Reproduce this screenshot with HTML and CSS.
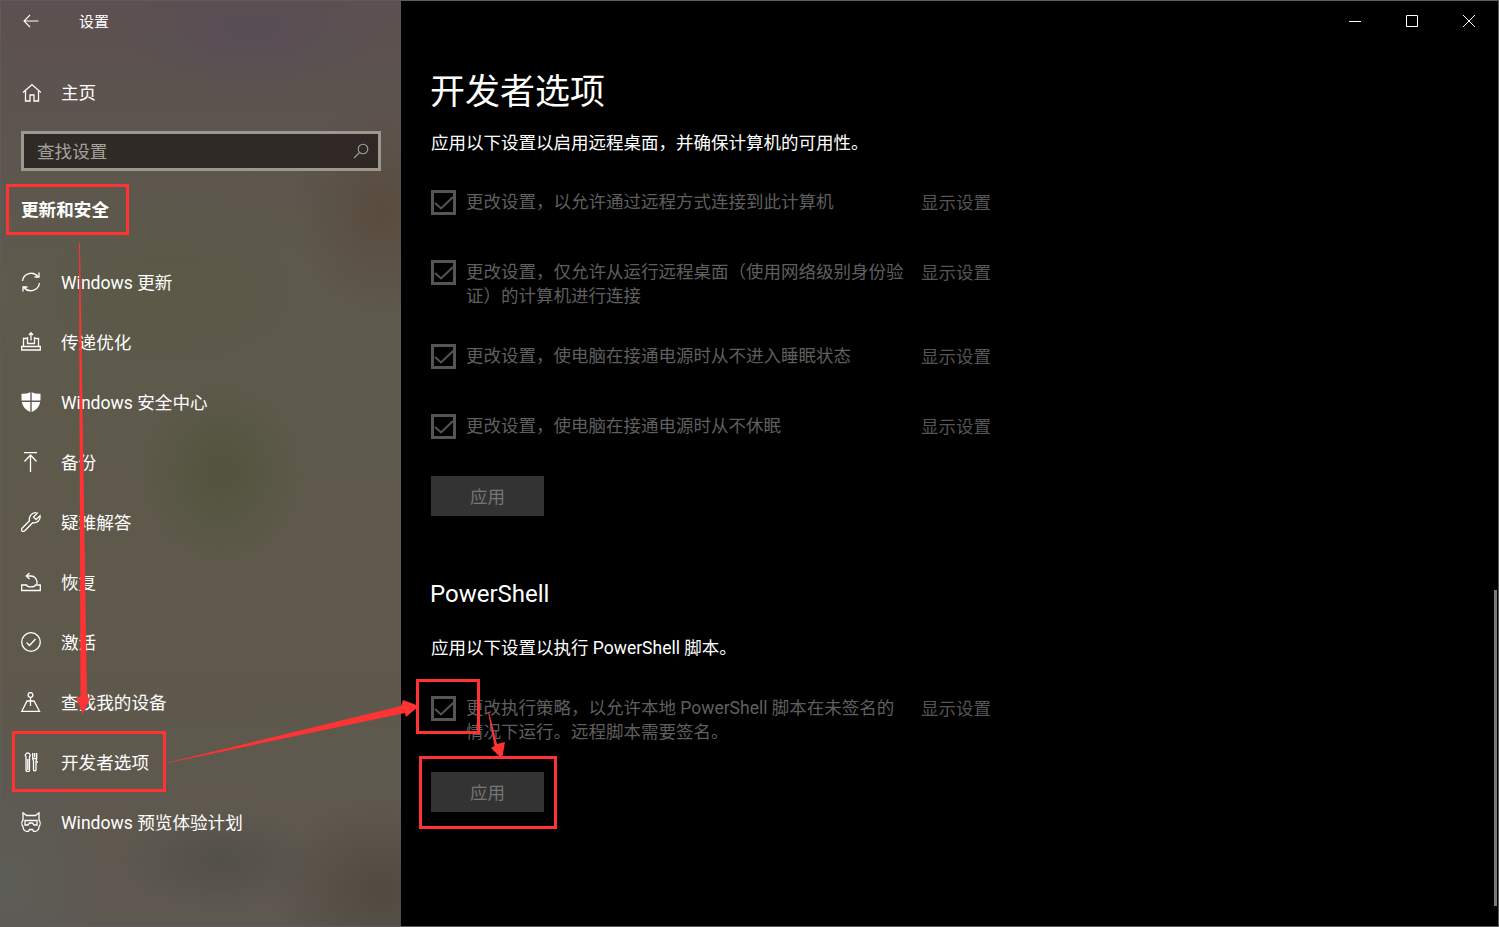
FILE: index.html
```html
<!DOCTYPE html>
<html lang="zh-CN">
  <head>
    <meta charset="utf-8">
    <title>设置</title>
    <link rel="stylesheet" href="styles.css">
  </head>
  <body>
    <div class="window">
      <aside class="sidebar">
        <div class="titlebar">
          <svg class="back" viewBox="0 0 16 14"><path d="M15.5 7H1M7 1L1 7l6 6"/></svg>
          <span class="title">设置</span>
        </div>

        <div class="nav-row home-row">
          <svg class="icon" viewBox="0 0 20 20"><path d="M2 10.5L11 2.5l9 8M4.5 8.5V19H9v-6h4v6h4.500V8.500"/></svg>
          <span>主页</span>
        </div>

        <div class="search">
          <span>查找设置</span>
          <svg class="search-icon" viewBox="0 0 16 16"><circle cx="10" cy="6" r="4.800"/><path d="M6.500 9.500L1 15"/></svg>
        </div>

        <h2 class="section">更新和安全</h2>

        <nav class="nav">
          <div class="nav-row">
            <svg class="icon" viewBox="0 0 20 20"><path d="M1.500 9A8.800 8.800 0 0 1 17 4.500M18.500 11A8.800 8.800 0 0 1 3 15.500M18 .5V5h-4.500M2 19.500V15h4.500"/></svg>
            <span>Windows 更新</span>
          </div>
          <div class="nav-row">
            <svg class="icon" viewBox="0 0 20 20"><path d="M.7 14.500h18.600v3.500H.7zM2.500 14.500V6.500H6M17.500 14.500V6.500H14M6.500 5v6.500h7V5M10 .5v8M8 3l2-2.300L12 3"/></svg>
            <span>传递优化</span>
          </div>
          <div class="nav-row">
            <svg class="icon icon-solid" viewBox="0 0 20 20"><path d="M.5 1.800Q6 2 9.300.2v8.300H.5zM10.700.2Q14 2 19.500 1.800v6.700h-8.800zM.8 10h8.500v10Q2 17 .8 10zM10.700 10h8.500Q18 17 10.700 20z"/></svg>
            <span>Windows 安全中心</span>
          </div>
          <div class="nav-row">
            <svg class="icon" viewBox="0 0 20 20"><path d="M3 .7h13M9.500 3v17M3.500 9.500l6-6.500 6 6.500"/></svg>
            <span>备份</span>
          </div>
          <div class="nav-row">
            <svg class="icon" viewBox="0 0 20 20"><path d="M.8 16.500L8.500 8.800C7.600 4.500 10.500.5 15 .7c.5 0 1 .1 1.400.3L12.500 5l2.500 2.500 4-3.800c.8 4-2.600 7.800-7.300 7L3.800 18.800c-2 1.500-4.500-.5-3-2.300z"/></svg>
            <span>疑难解答</span>
          </div>
          <div class="nav-row">
            <svg class="icon" viewBox="0 0 20 20"><path d="M.7 13h4.800c.5 2.500 8.500 2.500 9 0h4.800v5.500H.7zM16 12C16.500 7 13.500 4 10 4H5.500M8.500 1L5.300 4l3.200 3"/></svg>
            <span>恢复</span>
          </div>
          <div class="nav-row">
            <svg class="icon" viewBox="0 0 20 20"><circle cx="10" cy="10" r="9.300"/><path d="M5.500 10.500l3 3 6-6.500"/></svg>
            <span>激活</span>
          </div>
          <div class="nav-row">
            <svg class="icon" viewBox="0 0 20 20"><circle cx="9.500" cy="3" r="2.400"/><path d="M9.500 5.500V14M6 9h7l5.500 10.300H.8z"/></svg>
            <span>查找我的设备</span>
          </div>
          <div class="nav-row">
            <svg class="icon" viewBox="0 0 20 20"><path d="M5 4.800A2.300 2.300 0 1 1 8.500 4.800V18a1.700 1.700 0 0 1-3.500 0zM6.800 7v11M11.700 1v5.500h4V1M13.700 1v4M11.700 6.500L12.500 9v9a1.300 1.300 0 0 0 2.500 0V9l.7-2.500M15.500 10h1.500"/></svg>
            <span>开发者选项</span>
          </div>
          <div class="nav-row">
            <svg class="icon" viewBox="0 0 20 20"><path d="M2 .8L5.500 3.500h9L18 .8V8c1.500 2 1.500 5 0 6.500 0 2.500-1.500 4.800-4 4.800h-1.500l-1-1.800h-3l-1 1.800H6c-2.500 0-4-2.300-4-4.800C.5 13 .5 10 2 8zM4 8.500h12V13h-3l-1.500-2h-3L7 13H4z"/></svg>
            <span>Windows 预览体验计划</span>
          </div>
        </nav>
      </aside>

      <main class="main">
        <div class="controls">
          <span class="control"><svg viewBox="0 0 14 14"><path d="M1 7.500h12"/></svg></span>
          <span class="control"><svg viewBox="0 0 14 14"><path d="M1.500 1.500h11v11h-11z"/></svg></span>
          <span class="control"><svg viewBox="0 0 14 14"><path d="M1 1l12 12M13 1L1 13"/></svg></span>
        </div>

        <div class="content">
          <h1 class="page-title">开发者选项</h1>
          <p class="intro">应用以下设置以启用远程桌面，并确保计算机的可用性。</p>

          <div class="option">
            <span class="check"><svg viewBox="0 0 19 19"><path d="M1 10l6 5.500L19 4"/></svg></span>
            <span class="option-text">更改设置，以允许通过远程方式连接到此计算机</span>
            <a class="option-link">显示设置</a>
          </div>
          <div class="option">
            <span class="check"><svg viewBox="0 0 19 19"><path d="M1 10l6 5.500L19 4"/></svg></span>
            <span class="option-text">更改设置，仅允许从运行远程桌面（使用网络级别身份验<br>证）的计算机进行连接</span>
            <a class="option-link">显示设置</a>
          </div>
          <div class="option">
            <span class="check"><svg viewBox="0 0 19 19"><path d="M1 10l6 5.500L19 4"/></svg></span>
            <span class="option-text">更改设置，使电脑在接通电源时从不进入睡眠状态</span>
            <a class="option-link">显示设置</a>
          </div>
          <div class="option">
            <span class="check"><svg viewBox="0 0 19 19"><path d="M1 10l6 5.500L19 4"/></svg></span>
            <span class="option-text">更改设置，使电脑在接通电源时从不休眠</span>
            <a class="option-link">显示设置</a>
          </div>
          <button class="apply">应用</button>

          <h2 class="sub-title">PowerShell</h2>
          <p class="intro intro-ps">应用以下设置以执行 PowerShell 脚本。</p>

          <div class="option">
            <span class="check"><svg viewBox="0 0 19 19"><path d="M1 10l6 5.500L19 4"/></svg></span>
            <span class="option-text">更改执行策略，以允许本地 PowerShell 脚本在未签名的<br>情况下运行。远程脚本需要签名。</span>
            <a class="option-link">显示设置</a>
          </div>
          <button class="apply apply-ps">应用</button>
        </div>

        <div class="scrollbar"></div>
      </main>

      <!-- red annotations drawn on top of the screenshot -->
      <svg class="marks" viewBox="0 0 1499 927">
        <rect x="7.500" y="185.500" width="120" height="48"/>
        <rect x="13.500" y="732.500" width="151" height="58"/>
        <rect x="417.500" y="680.500" width="61" height="52"/>
        <rect x="420.500" y="757.500" width="135" height="70"/>
        <polygon points="79,243 80,243 87,698 91,697 82.500,714 76,697 80.500,698"/>
        <polygon points="168,762.500 401,706 403,700 419,706 406,717 405,713 168,763"/>
        <polygon points="488,712 489,712 497,744 505,742 502,759 491,748 494.500,746"/>
      </svg>
    </div>
  </body>
</html>
```

FILE: styles.css
```css
* { box-sizing: border-box; }

html, body { margin: 0; height: 100%; }

body {
  font-family: Roboto, "Noto Sans CJK SC", sans-serif;
  font-size: 17.5px;
  color: #fff;
  background: #000;
}

.window {
  position: relative;
  display: flex;
  width: 1499px;
  height: 927px;
  border: 1px solid #5c5c5c;
  overflow: hidden;
}

/* sidebar */
.sidebar {
  width: 400px;
  flex: none;
  background:
    radial-gradient(ellipse 80px 90px at 220px 470px, rgba(78, 82, 57, .8) 0%, rgba(78, 82, 57, 0) 100%),
    radial-gradient(ellipse 130px 60px at 250px 30px, rgba(88, 76, 88, .8) 0%, rgba(90, 76, 88, 0) 100%),
    radial-gradient(ellipse 100px 50px at 220px 860px, rgba(80, 78, 72, .8) 0%, rgba(86, 83, 73, 0) 100%),
    radial-gradient(ellipse 90px 110px at 380px 210px, rgba(88, 72, 58, .75) 0%, rgba(92, 74, 59, 0) 100%),
    radial-gradient(ellipse 110px 90px at 380px 890px, rgba(78, 70, 60, .8) 0%, rgba(80, 72, 63, 0) 100%),
    radial-gradient(ellipse 90px 120px at 10px 880px, rgba(92, 94, 88, .8) 0%, rgba(95, 96, 91, 0) 100%),
    radial-gradient(ellipse 160px 100px at 170px 280px, rgba(90, 88, 70, .8) 0%, rgba(95, 92, 74, 0) 100%),
    linear-gradient(180deg, #5c5050 0%, #5e5a4c 30%, #5e594a 65%, #5e5851 100%);
}

.titlebar {
  display: flex;
  align-items: center;
  height: 40px;
  padding-left: 22px;
}

.back {
  width: 16px;
  height: 14px;
  fill: none;
  stroke: #fff;
  stroke-width: 1.100;
}

.title {
  margin: -2px 0 0 40px;
  font-size: 15px;
}

.nav-row {
  display: flex;
  align-items: center;
  height: 60px;
  padding-left: 20px;
  gap: 20px;
  font-size: 17.6px;
  line-height: 1;
  white-space: nowrap;
}

.nav-row span { margin-top: 4px; }

.home-row { margin-top: 21px; }

.icon {
  width: 20px;
  height: 20px;
  flex: none;
  fill: none;
  stroke: #fff;
  stroke-width: 1.300;
}

.icon-solid { fill: #fff; stroke: none; }

.search {
  display: flex;
  align-items: center;
  justify-content: space-between;
  width: 360px;
  height: 40px;
  margin: 9px 0 0 20px;
  padding: 0 9px 0 13px;
  border: 3px solid #9b9892;
  background: rgba(18, 14, 14, 0.6);
  color: #a5a29d;
  font-size: 17.6px;
}

.search span { margin-top: -1px; }

.search-icon {
  width: 16px;
  height: 16px;
  fill: none;
  stroke: #a5a29d;
  stroke-width: 1.100;
}

.section {
  margin: 27px 0 0 20px;
  height: 24px;
  font-size: 17.600px;
  line-height: 24px;
  font-weight: 700;
}

.nav { margin-top: 30px; }

/* main pane */
.main {
  position: relative;
  flex: 1;
  min-width: 0;
  background: #000;
}

.controls {
  display: flex;
  justify-content: flex-end;
  height: 41px;
  padding-right: 1px;
}

.control {
  display: flex;
  align-items: center;
  justify-content: center;
  width: 57px;
  height: 40px;
}

.control svg {
  width: 14px;
  height: 14px;
  fill: none;
  stroke: #fff;
  stroke-width: 1;
}

.content { padding-left: 30px; }

.page-title {
  margin: 26px 0 0 -1px;
  font-size: 35px;
  font-weight: 400;
  line-height: 50px;
  height: 50px;
}

.intro {
  margin: 13px 0 0;
  line-height: 24px;
  height: 24px;
}

.option {
  display: flex;
  align-items: flex-start;
  width: 560px;
  margin-top: 36px;
  min-height: 34px;
}

.intro + .option { margin-top: 35px; }

.intro-ps + .option { margin-top: 36px; }

.check {
  width: 25px;
  height: 25px;
  flex: none;
  margin-right: 10px;
  border: 3px solid #555;
  display: flex;
}

.check svg {
  width: 19px;
  height: 19px;
  fill: none;
  stroke: #555;
  stroke-width: 2;
  overflow: visible;
}

.option-text {
  flex: 1;
  padding-top: 1px;
  color: #5f5f5f;
  line-height: 23.500px;
  white-space: nowrap;
}

.option-link {
  flex: none;
  color: #555;
  line-height: 26px;
}

.apply {
  display: block;
  width: 113px;
  height: 40px;
  margin-top: 28px;
  padding: 0 0 2px;
  border: 0;
  background: #333;
  color: #767676;
  font: inherit;
}

.apply-ps { margin-top: 28px; }

.sub-title {
  margin: 60px 0 0 -1px;
  font-size: 24px;
  font-weight: 400;
  line-height: 36px;
}

.intro-ps { margin-top: 24px; }

.scrollbar {
  position: absolute;
  right: 1px;
  top: 589px;
  width: 3px;
  height: 316px;
  background: #7a7a7a;
}

/* annotations */
.marks {
  position: absolute;
  left: -1px;
  top: -1px;
  width: 1499px;
  height: 927px;
  pointer-events: none;
}

.marks rect {
  fill: none;
  stroke: #ff3333;
  stroke-width: 3;
}

.marks polygon { fill: #ff3333; }
```
